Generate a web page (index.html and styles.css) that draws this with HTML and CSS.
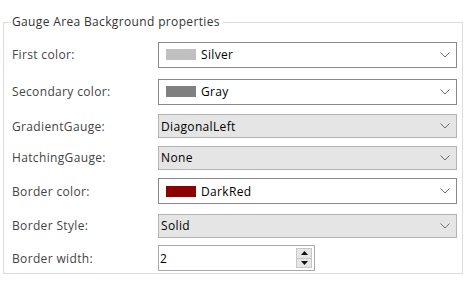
FILE: index.html
```html
<!DOCTYPE html>
<html lang="en">
<head>
    <meta charset="UTF-8">
    <title>Gauge Area Background properties</title>
    <link rel="stylesheet" href="styles.css">
</head>
<body>

    <fieldset class="group">
        <legend>Gauge Area Background properties</legend>
        <div class="grid">
            <label>First color:</label>
            <div class="combo">
                <span class="swatch silver"></span>
                <span class="value">Silver</span>
                <svg class="chevron" width="10" height="6" viewBox="0 0 10 6"><polyline points="0.5,0.5 5,5 9.5,0.5" fill="none" stroke="#707070" stroke-width="1"/></svg>
            </div>

            <label>Secondary color:</label>
            <div class="combo">
                <span class="swatch gray"></span>
                <span class="value">Gray</span>
                <svg class="chevron" width="10" height="6" viewBox="0 0 10 6"><polyline points="0.5,0.5 5,5 9.5,0.5" fill="none" stroke="#707070" stroke-width="1"/></svg>
            </div>

            <label>GradientGauge:</label>
            <div class="combo flat">
                <span class="value">DiagonalLeft</span>
                <svg class="chevron" width="10" height="6" viewBox="0 0 10 6"><polyline points="0.5,0.5 5,5 9.5,0.5" fill="none" stroke="#707070" stroke-width="1"/></svg>
            </div>

            <label>HatchingGauge:</label>
            <div class="combo flat">
                <span class="value">None</span>
                <svg class="chevron" width="10" height="6" viewBox="0 0 10 6"><polyline points="0.5,0.5 5,5 9.5,0.5" fill="none" stroke="#707070" stroke-width="1"/></svg>
            </div>

            <label>Border color:</label>
            <div class="combo">
                <span class="swatch darkred"></span>
                <span class="value">DarkRed</span>
                <svg class="chevron" width="10" height="6" viewBox="0 0 10 6"><polyline points="0.5,0.5 5,5 9.5,0.5" fill="none" stroke="#707070" stroke-width="1"/></svg>
            </div>

            <label>Border Style:</label>
            <div class="combo flat">
                <span class="value">Solid</span>
                <svg class="chevron" width="10" height="6" viewBox="0 0 10 6"><polyline points="0.5,0.5 5,5 9.5,0.5" fill="none" stroke="#707070" stroke-width="1"/></svg>
            </div>

            <label>Border width:</label>
            <div class="spin">
                <span class="value">2</span>
                <div class="spin-buttons">
                    <span class="spin-btn"><svg width="7" height="4" viewBox="0 0 7 4"><polygon points="0,4 3.5,0 7,4" fill="#111"/></svg></span>
                    <span class="spin-btn"><svg width="7" height="4" viewBox="0 0 7 4"><polygon points="0,0 7,0 3.5,4" fill="#111"/></svg></span>
                </div>
            </div>
        </div>
    </fieldset>

</body>
</html>
```

FILE: styles.css
```css
body {
    margin: 0;
    background: #ffffff;
    font-family: "Open Sans", "Segoe UI", sans-serif;
    font-size: 12px;
    letter-spacing: 0.35px;
    color: #000;
}
.group {
    box-sizing: border-box;
    width: 460px;
    height: 259px;
    margin: 15px 0 0 3px;
    padding: 0 0 0 8px;
    border: 1px solid #dcdcdc;
}
.group legend {
    padding: 0 3px 0 1px;
    margin-left: -1px;
    color: #333;
    line-height: 14px;
}
.grid {
    display: grid;
    grid-template-columns: 146px 299px;
    grid-template-rows: 37px 37px 32px 31px 36px 33px 32px;
    align-items: center;
    margin-top: 7px;
}
.grid label {
    color: #444;
}
.combo {
    box-sizing: border-box;
    height: 26px;
    display: flex;
    align-items: center;
    padding: 0 6px 0 7px;
    background: #fff;
    border: 1px solid #8a8a8a;
}
.combo.flat {
    height: 24px;
    padding-left: 2px;
    background: #e5e5e5;
    border-color: #b4b4b4;
}
.combo .value {
    flex: 1;
}
.swatch {
    width: 30px;
    height: 11px;
    margin-right: 5px;
}
.silver { background: #c0c0c0; }
.gray { background: #808080; }
.darkred { background: #8b0000; }
.chevron {
    display: block;
}
.spin {
    box-sizing: border-box;
    width: 157px;
    height: 26px;
    display: flex;
    align-items: center;
    padding: 0 2px 0 1px;
    background: #fff;
    border: 1px solid #a8a8a8;
}
.spin .value {
    flex: 1;
}
.spin-buttons {
    display: flex;
    flex-direction: column;
    width: 16px;
    height: 20px;
}
.spin-btn {
    flex: 1;
    display: flex;
    align-items: center;
    justify-content: center;
    background: #e6e6e6;
    border: 1px solid #c8c8c8;
}
.spin-btn + .spin-btn {
    border-top: none;
}
```
